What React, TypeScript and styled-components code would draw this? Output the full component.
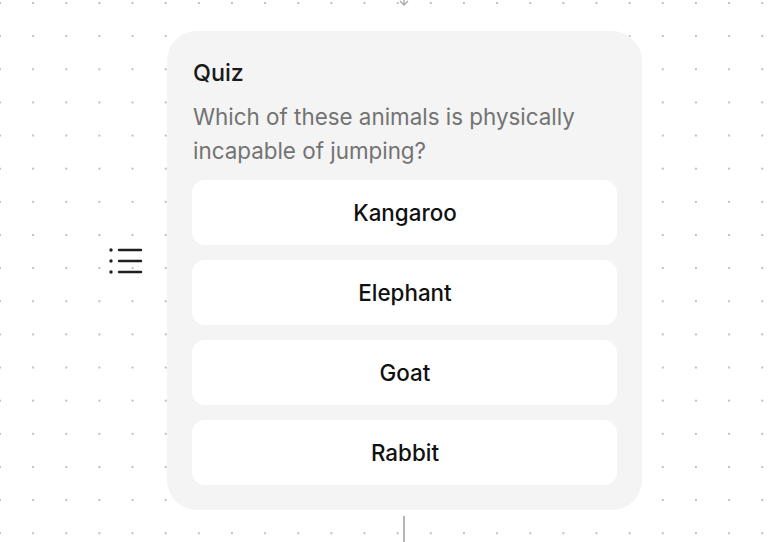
import styled, { createGlobalStyle } from 'styled-components'

const GlobalStyle = createGlobalStyle`
    html, body {
        margin: 0;
        padding: 0;
        background: #ffffff;
        font-family: Inter, "Noto Sans", "Liberation Sans", sans-serif;
    }
`

// diagram canvas with the dotted grid
const Canvas = styled.div`
    position: relative;
    width: 776px;
    height: 542px;
    overflow: hidden;
    background-color: #ffffff;
    background-image: radial-gradient(circle at center, #bfbfbf 0.8px, transparent 1.3px);
    background-size: 33.15px 33.15px;
    background-position: -16.6px -13.6px;
`

const EdgeIn = styled.svg`
    position: absolute;
    left: 398px;
    top: -4px;
`

const EdgeOut = styled.div`
    position: absolute;
    left: 403px;
    top: 516px;
    width: 1.5px;
    height: 30px;
    background: #b4b4b4;
`

const Handle = styled.svg`
    position: absolute;
    left: 106px;
    top: 244px;
    color: #1f1f1f;
`

const QuizNode = styled.div`
    position: absolute;
    left: 167px;
    top: 31px;
    width: 475px;
    box-sizing: border-box;
    padding: 25px;
    display: flex;
    flex-direction: column;
    background: #f4f4f4;
    border-radius: 30px;
`

const Title = styled.div`
    font-size: 23.3px;
    line-height: 33.3px;
    font-weight: 500;
    color: #1a1a1a;
    margin-bottom: 11px;
    padding-left: 1px;
`

const Question = styled.div`
    font-size: 22.4px;
    line-height: 33.3px;
    color: #737373;
    margin-bottom: 13px;
    padding-left: 1px;
`

const Options = styled.div`
    display: flex;
    flex-direction: column;
    gap: 15px;
`

const Option = styled.div`
    display: flex;
    justify-content: center;
    align-items: center;
    height: 65px;
    border-radius: 13px;
    background: #ffffff;
    font-size: 22.4px;
    font-weight: 500;
    color: #111111;
    padding-left: 1px;
`

const answers = ['Kangaroo', 'Elephant', 'Goat', 'Rabbit']

function ListIcon() {
    return (
        <Handle width="40" height="36" viewBox="0 0 40 36" fill="none">
            {[6, 17, 28].map(y => (
                <g key={y}>
                    <circle cx="5" cy={y} r="1.7" fill="currentColor" />
                    <line x1="13" y1={y} x2="35" y2={y} stroke="currentColor" strokeWidth="2.4" strokeLinecap="round" />
                </g>
            ))}
        </Handle>
    )
}

export default function App() {
    return (
        <>
            <GlobalStyle />
            <Canvas>
                <EdgeIn width="12" height="10" viewBox="0 0 12 10" fill="none">
                    <line x1="6" y1="0" x2="6" y2="9" stroke="#a8a8a8" strokeWidth="1.3" />
                    <path d="M2 5 L6 9 L10 5" stroke="#a8a8a8" strokeWidth="1.3" fill="none" />
                </EdgeIn>

                <ListIcon />

                <QuizNode>
                    <Title>Quiz</Title>
                    <Question>
                        Which of these animals is physically incapable of jumping?
                    </Question>
                    <Options>
                        {answers.map(answer => (
                            <Option key={answer}>{answer}</Option>
                        ))}
                    </Options>
                </QuizNode>

                <EdgeOut />
            </Canvas>
        </>
    )
}
